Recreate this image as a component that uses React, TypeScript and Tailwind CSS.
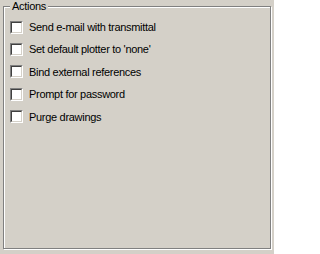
const actions = [
  "Send e-mail with transmittal",
  "Set default plotter to 'none'",
  "Bind external references",
  "Prompt for password",
  "Purge drawings",
];

function Checkbox() {
  return (
    <div className="w-[13px] h-[13px] shrink-0 border border-t-[#808080] border-l-[#808080] border-b-white border-r-white">
      <div className="w-full h-full bg-white border border-t-[#404040] border-l-[#404040] border-b-[#d4d0c8] border-r-[#d4d0c8]" />
    </div>
  );
}

export default function App() {
  return (
    <div className="w-[274px] h-[254px] bg-[#d4d0c8] pt-[6px] pl-[3px] font-['Liberation_Sans',Arial,sans-serif] text-[11px] text-black tracking-[-0.3px]">
      <div className="relative w-[268px] h-[243px] border border-[#808080] shadow-[inset_1px_1px_0_#fff,1px_1px_0_#fff]">
        <div className="absolute left-[6px] -top-[7px] px-[2px] bg-[#d4d0c8] leading-[13px]">Actions</div>
        <div className="flex flex-col pt-[9px] pl-[6px]">
          {actions.map((a) => (
            <label key={a} className="flex items-center gap-[6px] h-[22.4px]">
              <Checkbox />
              <span>{a}</span>
            </label>
          ))}
        </div>
      </div>
    </div>
  );
}
